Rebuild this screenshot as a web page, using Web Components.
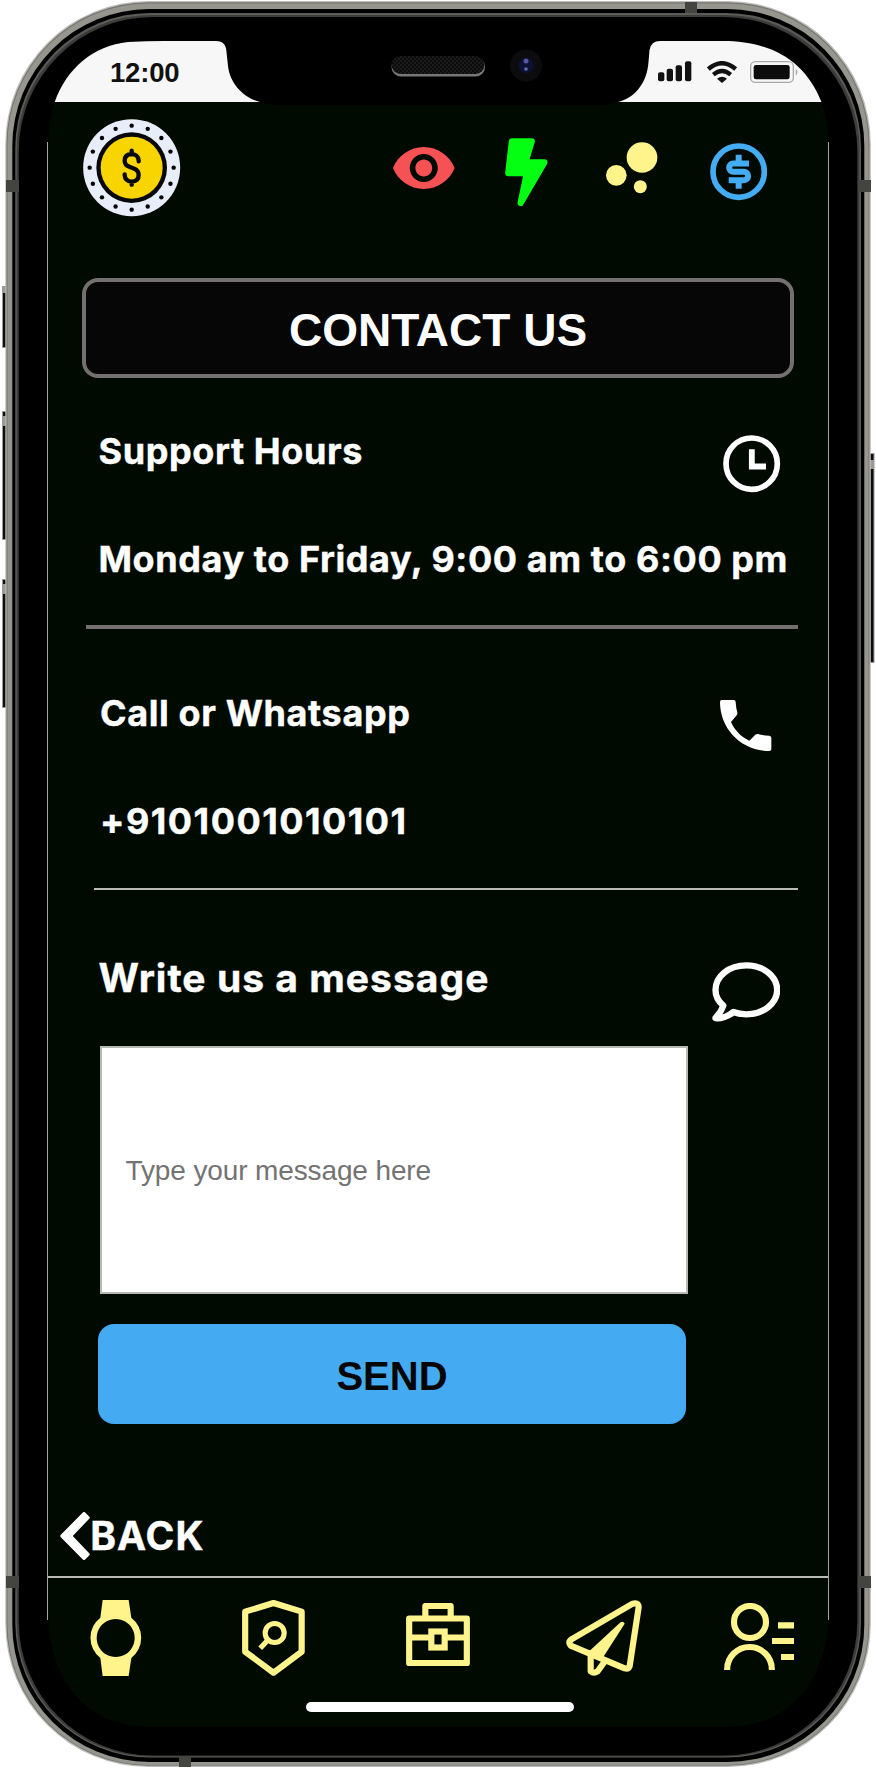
<!DOCTYPE html>
<html lang="en">
<head>
<meta charset="utf-8">
<title>Contact us</title>
<style>
body{margin:0;background:#fff;width:876px;height:1768px;overflow:hidden;font-family:Inter,"Liberation Sans",sans-serif;color:#fff}
</style>
</head>
<body>
<contact-screen></contact-screen>
<script>
const define = (name, html, setup) => customElements.define(name, class extends HTMLElement {
  connectedCallback() {
    if (this.shadowRoot) return;
    const root = this.attachShadow({mode: 'open'});
    const t = document.createElement('template');
    t.innerHTML = html;
    root.append(t.content.cloneNode(true));
    if (setup) setup(this, root);
  }
});

/* Icons are drawn on a grid three times finer than the page. */
const coinDots = Array.from({length: 16}, (_, i) => {
  const a = i * Math.PI / 8;
  return `<circle cx="${(146 + 126 * Math.cos(a)).toFixed(1)}" cy="${(146 + 126 * Math.sin(a)).toFixed(1)}" r="6.6" fill="#060608"/>`;
}).join('');
const ICONS = {
  coin: ['0 0 292 292', `<circle cx="146" cy="146" r="145.5" fill="#e8eef9"/>${coinDots}<circle cx="146" cy="146" r="106" fill="#08080a"/><circle cx="146" cy="146" r="93" fill="#f8d400"/><path d="M146 95V104M146 188V197M167 127V124A21.500 20 0 0 0 146 105Q125 106 125 125Q125 138 139 143L154 149Q167 154 167 168Q167 187 146 188Q126 187 125 168V166" fill="none" stroke="#08080a" stroke-width="13" stroke-linecap="round"/>`],
  eye: ['1 4.500 22 15', `<path fill="#f65254" d="M12 4.500C7 4.500 2.730 7.610 1 12c1.730 4.390 6 7.500 11 7.500s9.270-3.110 11-7.500c-1.730-4.390-6-7.500-11-7.500zM12 17c-2.760 0-5-2.240-5-5s2.240-5 5-5 5 2.240 5 5-2.240 5-5 5zm0-8c-1.660 0-3 1.340-3 3s1.340 3 3 3 3-1.340 3-3-1.340-3-3-3z"/>`],
  bolt: ['201 414 127 204', `<path d="M222 424H281L262 487H319L248 609L267 519H211Z" fill="#04ff12" stroke="#04ff12" stroke-width="19" stroke-linejoin="round"/>`],
  bubbles: ['505 427 155 154', `<g fill="#fff38b"><circle cx="613" cy="473.500" r="46"/><circle cx="536" cy="527" r="31"/><circle cx="608" cy="561" r="19.500"/></g>`],
  money: ['814 430 172 172', `<g fill="none" stroke="#44acf2"><circle cx="900" cy="516" r="77" stroke-width="17"/><path stroke-width="18" d="M900 465V492M931 491.500H884A12.500 12.500 0 0 0 884 516.500H916A12.500 12.500 0 0 1 916 541.500H870M900 541V567"/></g>`],
  clock: ['856 586 172 172', `<g fill="none" stroke="#fff"><circle cx="942" cy="672" r="77" stroke-width="17"/><path stroke-width="17.500" d="M942.500 629V680.500H985"/></g>`],
  phone: ['847 121 155 154', `<path fill="#fff" d="M852 121H888Q894 121 894 127Q895 145 899 158Q900 163 897 167L880 187C890 210 910 232 935 243L953 225Q956 222 961 223Q975 228 995 228Q1001 229 1001 234V268Q1001 274 995 274C912 274 847 209 847 127Q847 121 852 121Z"/>`],
  chat: ['821 906 205 180', `<path fill="none" stroke="#fff" stroke-width="19" stroke-linejoin="round" d="M885 1056Q904 1063 924 1063C975 1063 1016.500 1030 1016.500 990C1016.500 948 975 916 924 916C872 916 831.500 948 831.500 990C831.500 1010 841 1025 855 1037Q849 1056 831.500 1074Q831 1075 836 1075Q862 1075 885 1056Z"/>`],
  chevron: ['178 96 90 145', `<path fill="#fff" stroke="#fff" stroke-width="10" stroke-linejoin="round" d="M250 101L262 113L209 168L262 223L250 235L184 168Z"/>`],
  watch: ['271 360 155 228', `<path fill="#fff38b" fill-rule="evenodd" d="M309 360H387L395 413A76.500 76.500 0 0 1 395 534L387 588H309L302 534A76.500 76.500 0 0 1 302 413ZM348 417A57 57 0 1 0 348.100 417Z"/>`],
  shield: ['727 360 189 228', `<g fill="none" stroke="#fff38b"><path stroke-width="18.500" stroke-linejoin="round" d="M821.500 369L906 395V515L821.500 578L736.500 515V395Z"/><circle cx="825" cy="459" r="28.500" stroke-width="15.500"/><path d="M805 480L787 499" stroke-width="15.500" stroke-linecap="square"/></g>`],
  briefcase: ['1218 370 192 190', `<g fill="none" stroke="#fff38b" stroke-width="18.500"><rect x="1227.500" y="416.500" width="173" height="134" stroke-linejoin="round"/><path stroke-linejoin="round" d="M1276 416V379H1352V416"/><path d="M1228 473.500H1288M1341 473.500H1401"/><rect x="1294" y="455.500" width="40" height="48"/></g>`],
  plane: ['384 360 229 228', `<g fill="none" stroke="#fff38b" stroke-width="18.500" stroke-linejoin="round" stroke-linecap="round"><path d="M584 371L399 479Q390 487 398 497L560 565Q571 568 575 558L602 382Q602 367 584 371Z"/><path d="M458 520V574Q468 582 479 574L499 546"/></g><path fill="#fff38b" d="M546 428Q556 422 560 431L494 534L452 515Z"/>`],
  person: ['858 369 210 201', `<g fill="none" stroke="#fff38b" stroke-width="18.500"><circle cx="936" cy="426" r="48"/><path d="M867.500 570V568A67 67 0 0 1 1001.500 568V570M1020 436H1068M1002 483H1068M1029 531H1068"/></g>`],
  signal: ['0 0 102 62', `<g fill="#111"><rect y="34" width="19" height="27" rx="6"/><rect x="26" y="23" width="19" height="38" rx="6"/><rect x="53" y="13" width="19" height="48" rx="6"/><rect x="81" y="1" width="19" height="60" rx="6"/></g>`],
  wifi: ['0 0 90 66', `<g fill="none" stroke="#111" stroke-width="13"><path d="M4 24Q45-11 86 24"/><path d="M19 41Q45 19 71 41"/></g><path fill="#111" d="M30 53Q45 42 60 53L45 66Z"/>`],
  battery: ['0 0 144 66', `<rect x="2" y="2" width="128" height="62" rx="14" fill="none" stroke="#aaa" stroke-width="4"/><rect x="11" y="12" width="108" height="43" rx="7" fill="#0c0c0c"/><path d="M137 23Q148 33 137 44Z" fill="#aaa"/>`]
};
define('app-icon', `<style>:host{display:block;flex:none}svg{display:block;width:100%;height:100%}</style><svg></svg>`, (el, root) => {
  const [box, art] = ICONS[el.getAttribute('name')];
  const svg = root.querySelector('svg');
  const p = box.split(' ');
  const k = el.getAttribute('name') === 'eye' ? 2.8 : 1 / 3;
  el.style.width = p[2] * k + 'px';
  el.style.height = p[3] * k + 'px';
  svg.setAttribute('viewBox', box);
  svg.innerHTML = art;
});

define('phone-frame', `<style>
:host{display:block;position:relative;width:876px;height:1768px}
svg{position:absolute;inset:0}
main{position:relative;box-sizing:border-box;height:100%;padding:0 47px 0 48px;display:flex;flex-direction:column}
</style>
<svg width="876" height="1768" viewBox="0 0 876 1768">
<defs><pattern id="mesh" width="4" height="4" patternUnits="userSpaceOnUse"><rect width="4" height="4" fill="#0c0c0c"/><circle cx="1" cy="1" r=".9" fill="#222"/><circle cx="3" cy="3" r=".9" fill="#222"/></pattern></defs>
<g fill="#0c0f0f" stroke="#9a9a96"><rect x="2.500" y="286.500" width="6" height="61"/><rect x="2.500" y="411.500" width="6" height="128"/><rect x="2.500" y="579.500" width="6" height="128"/><rect x="867" y="453.500" width="7" height="209"/></g>
<g fill="#9a9a96"><rect x="2" y="287" width="4" height="6"/><rect x="2" y="416" width="4" height="10"/><rect x="2" y="584" width="4" height="10"/><rect x="870" y="460" width="4" height="9"/></g>
<rect x="5.300" y="1" width="865.500" height="1766" rx="143" fill="#bdbdba"/>
<rect x="6.500" y="2.300" width="863" height="1763.500" rx="142" fill="#74746f"/>
<rect x="7.500" y="3.500" width="861" height="1761.500" rx="141" fill="#96958e"/>
<rect x="12.300" y="9" width="852" height="1753" rx="137" fill="#000"/>
<rect x="15.300" y="13" width="845.700" height="1744.500" rx="135" fill="#5c5c58"/>
<rect x="16.800" y="15" width="842.700" height="1741.500" rx="134" fill="#3c3c3a"/>
<rect x="18.800" y="17" width="838.500" height="1738.500" rx="134" fill="#000"/>
<g fill="#444440"><rect x="6" y="180" width="13" height="12"/><rect x="858" y="180" width="13" height="12"/><rect x="6" y="1576" width="13" height="12"/><rect x="858" y="1576" width="13" height="12"/><rect x="685" y="2" width="12" height="11"/><rect x="179" y="1756" width="12" height="11"/></g>
<path fill="#010a00" d="M54.700 102H260Q267 105 280 105H598Q611 105 618 102H821.500Q828.500 120 829 145V1610C829 1680 790 1727 726 1727H150C86 1727 48 1680 48 1610V145Q48.500 120 54.700 102Z"/>
<path d="M47.500 142V1620M828.500 142V1620" stroke="#a3a5a0" fill="none"/>
<path fill="#f7f7f7" d="M54.700 102C67 68 93 46 128 42Q146 41 165 41H216Q226 41 226.500 52L228 66C230 84 244 98 260 102Z"/>
<path fill="#f7f7f7" d="M618 102C634 98 647 84 648.500 62L649.500 50Q651 41 660 41H722C772 41 805 61 821.500 102Z"/>
<rect x="391.500" y="57" width="93.500" height="19.500" rx="9.500" fill="#777"/>
<rect x="391.500" y="56" width="93" height="18" rx="9" fill="url(#mesh)"/>
<circle cx="526" cy="65.500" r="16" fill="#0c0c0e"/><circle cx="526" cy="65.500" r="7.500" fill="#0b1233"/><circle cx="526" cy="61" r="2.500" fill="#5a55a0"/><circle cx="526" cy="69" r="1.800" fill="#6072aa"/>
</svg>
<main><slot></slot></main>`);

define('status-bar', `<style>
:host{display:flex;height:102px;padding:57.500px 30px 0 62px;box-sizing:border-box;justify-content:space-between;align-items:flex-start;color:#111}
time{font:bold 27.500px/30px "Liberation Sans",Arial,sans-serif;letter-spacing:-.2px}
div{display:flex;gap:15px;padding-top:3.500px;width:141px;box-sizing:border-box}
app-icon+app-icon{margin-left:-.5px}
app-icon+app-icon+app-icon{margin-left:-2px}
</style><time>12:00</time><div><app-icon name="signal"></app-icon><app-icon name="wifi"></app-icon><app-icon name="battery"></app-icon></div>`);

define('app-header', `<style>
:host{display:flex;height:176px;box-sizing:border-box;padding:17.200px 61px 0 35.400px;align-items:flex-start}
.eye{margin:27.800px 0 0 212.700px}.bolt{margin:18.800px 0 0 50.200px}.bubbles{margin:23.200px 0 0 58.900px}.money{margin:24.300px 0 0 51.500px}
</style><app-icon name="coin"></app-icon><app-icon class="eye" name="eye"></app-icon><app-icon class="bolt" name="bolt"></app-icon><app-icon class="bubbles" name="bubbles"></app-icon><app-icon class="money" name="money"></app-icon>`);

define('page-title', `<style>
:host{display:block;margin:0 35px 0 34px;height:100px;box-sizing:border-box;border:4px solid #747070;border-radius:16px;background:#060606}
h1{margin:0;padding-top:2px;font:bold 46px/92px "Liberation Sans",Arial,sans-serif;text-align:center}
</style><h1><slot></slot></h1>`);

define('contact-row', `<style>
:host{display:block;padding:var(--top) 0 0 var(--left,51px)}
header{display:flex;justify-content:space-between;align-items:flex-start;height:var(--head);padding-right:var(--icon-right)}
h2{margin:0;font-weight:700;font-size:var(--size,36px);line-height:40px;letter-spacing:var(--track,.6px);white-space:nowrap;-webkit-text-stroke:.4px #fff}
</style><header><h2><slot name="title"></slot></h2><slot name="icon"></slot></header><slot></slot>`);

define('info-text', `<style>:host{display:block;height:40px;font-weight:700;font-size:36px;line-height:40px;letter-spacing:var(--digits,.58px);white-space:nowrap;-webkit-text-stroke:.4px #fff}</style><slot></slot>`);

define('message-form', `<style>
:host{display:block;padding-left:50px}
.field{box-sizing:border-box;margin-left:2px;width:588px;height:248px;border:2px solid #b6b8b3;background:#fff;color:#737373;padding:1px 0 0 23.500px;font:28px/244px "Liberation Sans",Arial,sans-serif;letter-spacing:-.12px}
button{display:block;margin:30px 0 0;width:588px;height:100px;border:0;border-radius:16px;background:#44abf2;color:#060606;padding:3px 0 0;font:bold 40px/96px "Liberation Sans",Arial,sans-serif}
</style><div class="field">Type your message here</div><button>SEND</button>`);

define('back-link', `<style>
:host{display:flex;align-items:flex-start;margin-top:88px;height:64px;padding-left:11.500px;font-weight:700;font-size:39px;line-height:48px}
span{padding:0 0 0 .8px;letter-spacing:1px;-webkit-text-stroke:.4px #fff}
</style><app-icon name="chevron"></app-icon><span><slot></slot></span>`);

define('tab-bar', `<style>
:host{display:block;border-top:2px solid #b9bcb6;height:189px;box-sizing:border-box;width:780px}
nav{display:flex;align-items:flex-start;padding:22px 0 0 42.300px;height:124px;box-sizing:border-box}
.s{margin-left:100.300px}.b{margin:3px 0 0 100.800px}.l{margin-left:96px}.p{margin:3px 0 0 81.700px}
.bar{width:268px;height:10px;border-radius:5px;background:#fff;margin-left:258px}
</style><nav><app-icon name="watch"></app-icon><app-icon class="s" name="shield"></app-icon><app-icon class="b" name="briefcase"></app-icon><app-icon class="l" name="plane"></app-icon><app-icon class="p" name="person"></app-icon></nav><div class="bar"></div>`);

define('contact-screen', `<style>
:host{display:block}
hr{border:0;margin:46px 31px 0 38px;height:4px;background:#747070;flex:none}
hr.thin{margin:47px 31px 0 46px;height:2px;background:#b9bcb6}
.hours{--top:53px;--left:50.500px;--head:108px;--icon-right:48.500px}
.hours app-icon{margin-top:4.300px}
.call{--top:64px;--left:52px;--head:108px;--icon-right:57.300px;--digits:1.500px}
.call app-icon{margin-top:7px}
.write{--top:68px;--head:88px;--icon-right:49px;--size:39px;--track:1.020px;--left:50.500px}
.write app-icon{margin-top:4px}
</style>
<phone-frame>
<status-bar></status-bar><app-header></app-header><page-title>CONTACT US</page-title>
<contact-row class="hours"><span slot="title">Support Hours</span><app-icon slot="icon" name="clock"></app-icon><info-text>Monday to Friday, 9:00 am to 6:00 pm</info-text></contact-row>
<hr>
<contact-row class="call"><span slot="title">Call or Whatsapp</span><app-icon slot="icon" name="phone"></app-icon><info-text>+9101001010101</info-text></contact-row>
<hr class="thin">
<contact-row class="write"><span slot="title">Write us a message</span><app-icon slot="icon" name="chat"></app-icon></contact-row>
<message-form></message-form>
<back-link>BACK</back-link>
<tab-bar></tab-bar>
</phone-frame>`);
</script>
</body>
</html>
